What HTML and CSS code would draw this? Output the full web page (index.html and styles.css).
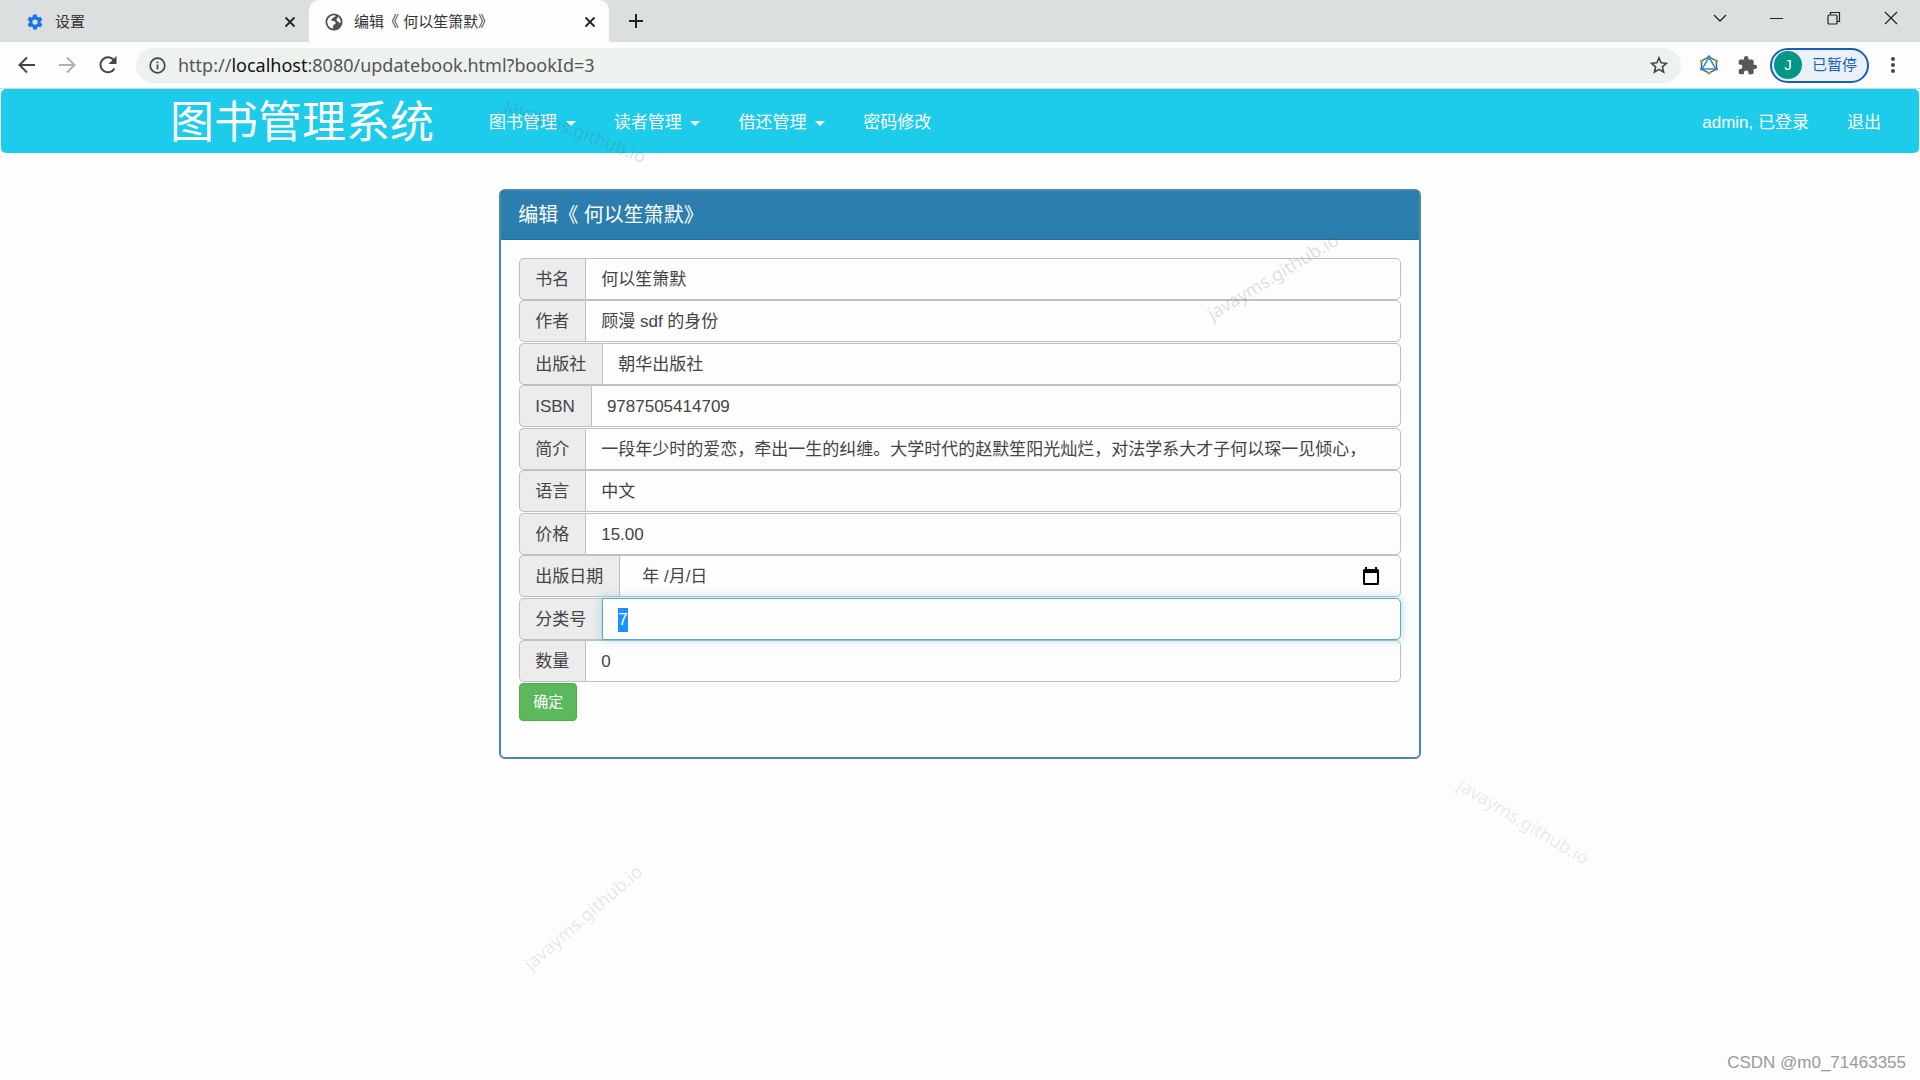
FILE: index.html
```
<!DOCTYPE html>
<html lang="zh-CN">
<head>
    <meta charset="UTF-8">
    <meta name="viewport" content="width=device-width, initial-scale=1.0">
    <title>编辑《 何以笙箫默》</title>
    <link rel="stylesheet" href="styles.css">
</head>
<body>
    <!-- Browser window -->
    <div class="tab-bar">
        <div class="tab">
            <svg class="tab-icon" viewBox="0 0 24 24" fill="#1a73e8"><path d="M19.4 13c0-.3.1-.6.1-1s0-.7-.1-1l2.1-1.600c.2-.2.2-.4.1-.6l-2-3.500c-.1-.2-.3-.3-.6-.2l-2.500 1c-.5-.4-1.100-.7-1.700-1l-.4-2.600c0-.3-.2-.5-.5-.5h-4c-.2 0-.5.2-.5.400l-.4 2.700c-.6.2-1.100.6-1.700 1l-2.500-1c-.2-.1-.5 0-.6.200l-2 3.500c-.1.200 0 .5.100.6L4.500 11c0 .3-.1.600-.1 1s0 .700.1 1l-2.100 1.600c-.2.200-.2.400-.1.600l2 3.500c.1.200.3.300.6.200l2.500-1c.5.400 1.100.700 1.700 1l.4 2.600c0 .300.2.500.5.500h4c.2 0 .5-.2.5-.4l.4-2.700c.6-.2 1.100-.6 1.700-1l2.500 1c.2.100.5 0 .6-.2l2-3.500c.1-.2 0-.5-.1-.6zM12 15.500a3.500 3.500 0 1 1 0-7 3.500 3.500 0 0 1 0 7z"/></svg>
            <span class="tab-title">设置</span>
            <button class="icon-btn" aria-label="关闭"><svg width="12" height="12" viewBox="0 0 12 12"><path d="M1.500 1.500l9 9M10.500 1.500l-9 9" stroke="#222" stroke-width="1.800"/></svg></button>
        </div>
        <div class="tab active">
            <svg class="tab-icon" viewBox="0 0 20 20"><circle cx="10" cy="10" r="9.500" fill="#4d5156"/><path d="M2.500 9.500C3 5.500 6 2.700 10 2.400l1.800.4c-.2 1.600-1.300 2-2.800 2.200-.3 1.200-.8 1.700-2 1.800.1 1.300.2 1.900 1.300 2 1.800 0 3.400.2 3.500 2.200.3 1.300-1.500 1.500-2.400 2.100-.4 1.300.1 2.500-.8 4.200-3.500-.5-6.200-3.700-6.100-7.800zM14 4c2 1.300 3.300 3.500 3.400 6-.5 1.300-1 1.500-1.800.5-.6-1.300-2-.9-2.700-2.100-.4-1.300.3-2.400 1.200-2.800z" fill="#fdfdfd"/></svg>
            <span class="tab-title">编辑《 何以笙箫默》</span>
            <button class="icon-btn" aria-label="关闭"><svg width="12" height="12" viewBox="0 0 12 12"><path d="M1.500 1.500l9 9M10.500 1.500l-9 9" stroke="#222" stroke-width="1.800"/></svg></button>
        </div>
        <button class="icon-btn new-tab" aria-label="新标签页"><svg width="16" height="16" viewBox="0 0 16 16"><path d="M8 1v14M1 8h14" stroke="#222" stroke-width="2"/></svg></button>
        <div class="window-buttons">
            <button class="icon-btn" aria-label="搜索标签页"><svg width="14" height="14" viewBox="0 0 14 14"><path d="M1 4l6 6 6-6" fill="none" stroke="#222" stroke-width="1.300"/></svg></button>
            <button class="icon-btn" aria-label="最小化"><svg width="14" height="14" viewBox="0 0 14 14"><path d="M0 7.500h13" stroke="#222"/></svg></button>
            <button class="icon-btn" aria-label="还原"><svg width="14" height="14" viewBox="0 0 14 14" fill="none" stroke="#222" stroke-width="1.200"><rect x="1" y="4" width="9" height="9" rx="1"/><path d="M3.500 4V1.500h9v9H10"/></svg></button>
            <button class="icon-btn" aria-label="关闭窗口"><svg width="14" height="14" viewBox="0 0 14 14"><path d="M1 1l12 12M13 1L1 13" stroke="#222" stroke-width="1.200"/></svg></button>
        </div>
    </div>

    <div class="toolbar">
        <button class="icon-btn" aria-label="后退"><svg width="18" height="18" viewBox="0 0 18 18" fill="none" stroke="#444" stroke-width="2"><path d="M17 9H2M9 1.500L1.500 9 9 16.500"/></svg></button>
        <button class="icon-btn" aria-label="前进"><svg width="18" height="18" viewBox="0 0 18 18" fill="none" stroke="#b0b2b4" stroke-width="2"><path d="M1 9h15M9 1.500L16.500 9 9 16.500"/></svg></button>
        <button class="icon-btn" aria-label="重新加载"><svg width="20" height="20" viewBox="0 0 20 20"><path d="M16.500 13.500A7.500 7.500 0 1 1 16 5.300" fill="none" stroke="#444" stroke-width="2"/><path d="M18.500 1v8h-8z" fill="#444"/></svg></button>
        <div class="address">
            <svg width="17" height="17" viewBox="0 0 17 17" fill="none" stroke="#444" stroke-width="1.700"><circle cx="8.500" cy="8.500" r="7.300"/><path d="M8.500 7.500v5M8.500 4.400v1.800"/></svg>
            <a class="url" href="#">http://<b>localhost</b>:8080/updatebook.html?bookId=3</a>
            <button class="icon-btn" aria-label="收藏"><svg width="18" height="18" viewBox="0 0 18 18"><path d="M9 1.800l2.100 5 5.400.5-4.100 3.600 1.200 5.300L9 13.400l-4.600 2.800 1.200-5.300L1.500 7.300l5.400-.5z" fill="none" stroke="#444" stroke-width="1.600"/></svg></button>
        </div>
        <button class="icon-btn ext" aria-label="GraphQL"><svg width="20" height="20" viewBox="0 0 20 20"><path d="M10 2l7.500 4v8L10 18l-7.500-4V6z" fill="none" stroke="#555" stroke-width="1.400"/><path d="M10 2.500L17 14H3z" fill="#fff" stroke="#2b8fc4" stroke-width="1.500"/><g fill="#7ab82e"><circle cx="2.500" cy="6" r="1.600"/><circle cx="17.500" cy="6" r="1.600"/><circle cx="10" cy="18" r="1.600"/></g><g fill="#2b8fc4"><circle cx="10" cy="2" r="1.700"/><circle cx="2.500" cy="14" r="1.600"/><circle cx="17.500" cy="14" r="1.600"/></g></svg></button>
        <button class="icon-btn ext" aria-label="扩展程序"><svg width="21" height="21" viewBox="0 0 24 24" fill="#555759"><path d="M20.500 11H19V7a2 2 0 0 0-2-2h-4V3.500a2.500 2.500 0 0 0-5 0V5H4a2 2 0 0 0-2 2v3.800h1.500a2.700 2.700 0 0 1 0 5.400H2V20a2 2 0 0 0 2 2h3.800v-1.500a2.700 2.700 0 0 1 5.400 0V22H17a2 2 0 0 0 2-2v-4h1.500a2.500 2.500 0 0 0 0-5z"/></svg></button>
        <button class="profile"><span class="avatar">J</span>已暂停</button>
        <button class="icon-btn more" aria-label="更多"><svg width="4" height="18" viewBox="0 0 4 18" fill="#444"><circle cx="2" cy="3" r="2"/><circle cx="2" cy="9" r="2"/><circle cx="2" cy="15" r="2"/></svg></button>
    </div>

    <!-- Page -->
    <nav class="navbar">
        <a class="brand" href="#">图书管理系统</a>
        <a href="#">图书管理 <span class="caret"></span></a>
        <a href="#">读者管理 <span class="caret"></span></a>
        <a href="#">借还管理 <span class="caret"></span></a>
        <a href="#">密码修改</a>
        <a class="user" href="#">admin, 已登录</a>
        <a href="#">退出</a>
    </nav>

    <main class="panel">
        <h3 class="panel-heading">编辑《 何以笙箫默》</h3>
        <form class="panel-body">
            <div class="input-group">
                <label for="name">书名</label>
                <input type="text" id="name" value="何以笙箫默">
            </div>
            <div class="input-group">
                <label for="author">作者</label>
                <input type="text" id="author" value="顾漫 sdf 的身份">
            </div>
            <div class="input-group">
                <label for="publish">出版社</label>
                <input type="text" id="publish" value="朝华出版社">
            </div>
            <div class="input-group">
                <label for="isbn">ISBN</label>
                <input type="text" id="isbn" value="9787505414709">
            </div>
            <div class="input-group">
                <label for="introduction">简介</label>
                <input type="text" id="introduction" value="一段年少时的爱恋，牵出一生的纠缠。大学时代的赵默笙阳光灿烂，对法学系大才子何以琛一见倾心，">
            </div>
            <div class="input-group">
                <label for="language">语言</label>
                <input type="text" id="language" value="中文">
            </div>
            <div class="input-group">
                <label for="price">价格</label>
                <input type="text" id="price" value="15.00">
            </div>
            <div class="input-group date">
                <label for="pubdate">出版日期</label>
                <input type="text" id="pubdate" value="年 /月/日">
                <button type="button" class="icon-btn" aria-label="选择日期"><svg width="16" height="18" viewBox="0 0 16 18"><path d="M2 2V0h2v2h8V0h2v2h.500A1.500 1.500 0 0 1 16 3.500v13a1.500 1.500 0 0 1-1.500 1.500h-13A1.500 1.500 0 0 1 0 16.500v-13A1.500 1.500 0 0 1 1.500 2zM2 6v10h12V6z"/></svg></button>
            </div>
            <div class="input-group">
                <label for="classId">分类号</label>
                <input type="text" id="classId" value="7">
            </div>
            <div class="input-group">
                <label for="number">数量</label>
                <input type="text" id="number" value="0">
            </div>
            <button type="submit" class="btn-success">确定</button>
        </form>
    </main>

    <!-- Watermarks -->
    <span class="watermark mark-nav">javayms.github.io</span>
    <span class="watermark mark-panel">javayms.github.io</span>
    <span class="watermark mark-left">javayms.github.io</span>
    <span class="watermark mark-right">javayms.github.io</span>
    <span class="credit">CSDN @m0_71463355</span>

    <script>
        document.getElementById("classId").select();
    </script>
</body>
</html>
```
FILE: styles.css
```
* {
    box-sizing: border-box;
}

html {
    height: 100%;
}

body {
    margin: 0;
    min-height: 100%;
    position: relative;
    overflow: hidden;
    background-color: #fdfdfd;
    color: #444;
    font-family: "Liberation Sans", "Noto Sans CJK SC", sans-serif;
    font-size: 17px;
    line-height: 24px;
}

a {
    color: inherit;
    text-decoration: none;
}

button,
input {
    font: inherit;
    color: inherit;
}

.icon-btn {
    display: flex;
    align-items: center;
    justify-content: center;
    flex: none;
    padding: 0;
    border: none;
    background: none;
}

/* Tabs */
.tab-bar {
    display: flex;
    align-items: center;
    height: 42px;
    background-color: #dbdfe0;
}

.tab {
    display: flex;
    align-items: center;
    width: 309px;
    height: 42px;
    padding: 2px 13px 0 26px;
    color: #333;
    font-size: 15px;
}

.tab.active {
    width: 300px;
    padding-left: 16px;
    background-color: #fdfdfd;
    border-radius: 10px 10px 0 0;
}

.tab-icon {
    width: 18px;
    height: 18px;
    margin-right: 11px;
}

.tab-title {
    flex: 1;
}

.new-tab {
    margin-left: 19px;
}

.window-buttons {
    display: flex;
    gap: 43px;
    margin: 0 22px 6px auto;
}

/* Toolbar */
.toolbar {
    display: flex;
    align-items: center;
    height: 47px;
    padding: 0 25px 0 18px;
    gap: 22px;
    border-bottom: 1px solid #ddd3d2;
}

.address {
    display: flex;
    align-items: center;
    flex: 1;
    height: 35px;
    padding: 0 13px;
    margin: 0 -4px;
    border-radius: 18px;
    background-color: #eef2ef;
}

.url {
    flex: 1;
    margin-left: 12px;
    color: #555;
    font-family: "Noto Sans", sans-serif;
    font-size: 18px;
}

.url b {
    color: #111;
    font-weight: normal;
}

.ext {
    margin-right: -4px;
}

.profile {
    display: flex;
    align-items: center;
    gap: 10px;
    height: 35px;
    margin-left: -6px;
    padding: 0 10px 0 2px;
    border: 2px solid #1b5fb5;
    border-radius: 18px;
    background-color: #eaf0f8;
    color: #1b5fb5;
    font-size: 15px;
}

.avatar {
    width: 28px;
    height: 28px;
    border-radius: 50%;
    background-color: #009688;
    color: #fff;
    line-height: 28px;
    text-align: center;
}

/* Navbar */
.navbar {
    display: flex;
    align-items: center;
    height: 64px;
    margin: 0 1px 36px;
    padding: 3px 19px 0 150px;
    border-radius: 5px;
    background-color: #1dcbea;
    color: #fff;
}

.navbar a {
    padding: 0 19px;
    white-space: nowrap;
}

.navbar .brand {
    margin-right: 17px;
    font-size: 44px;
    line-height: 60px;
}

.navbar .user {
    margin-left: auto;
}

.caret {
    display: inline-block;
    margin-left: 4px;
    vertical-align: middle;
    border-top: 5px solid;
    border-left: 5px solid transparent;
    border-right: 5px solid transparent;
}

/* Panel */
.panel {
    width: 48%;
    margin: 0 auto;
    border: 2px solid #4e8aa5;
    border-radius: 6px;
}

.panel-heading {
    margin: 0;
    padding: 11px 17px;
    border-bottom: 1px solid #23709c;
    background-color: #2c7eae;
    color: #fff;
    font-size: 20px;
    font-weight: normal;
    line-height: 26px;
}

.panel-body {
    padding: 18px 18px 36px;
}

.input-group {
    display: flex;
    height: 42px;
}

.input-group:nth-child(even) {
    margin-bottom: 1px;
}

.input-group label {
    padding: 9px 16px 0 15px;
    border: 1px solid #bfbfbf;
    border-right: none;
    border-radius: 5px 0 0 5px;
    background-color: #ececec;
}

.input-group input {
    flex: 1;
    min-width: 0;
    padding: 1px 15px 0;
    border: 1px solid #bfbfbf;
    border-radius: 0 5px 5px 0;
    outline: none;
    background-color: #fdfdfd;
}

.input-group input:focus {
    border-color: #5aa9cd;
    box-shadow: 0 0 10px rgba(80, 190, 215, 0.5);
    z-index: 1;
}

.input-group input::selection {
    background-color: #1e90ff;
    color: #fff;
}

.date input {
    padding-left: 22px;
    border-right: none;
    border-radius: 0;
}

.date button {
    padding-right: 21px;
    border: solid #bfbfbf;
    border-width: 1px 1px 1px 0;
    border-radius: 0 5px 5px 0;
}

.btn-success {
    display: block;
    height: 38px;
    padding: 0 13px;
    border: 1px solid #4cae4c;
    border-radius: 4px;
    background-color: #5cb85c;
    color: #fff;
    font-size: 15px;
}

/* Watermarks */
.watermark {
    position: absolute;
    color: rgba(90, 90, 90, 0.2);
    font-family: "Noto Sans", sans-serif;
    font-size: 18px;
    pointer-events: none;
}

.mark-nav {
    left: 501px;
    top: 118px;
    transform: rotate(21deg);
}

.mark-panel {
    left: 1198px;
    top: 264px;
    transform: rotate(-31deg);
}

.mark-left {
    left: 508px;
    top: 905px;
    color: rgba(90, 90, 90, 0.15);
    transform: rotate(-41deg);
}

.mark-right {
    left: 1449px;
    top: 809px;
    color: rgba(90, 90, 90, 0.13);
    transform: rotate(31deg);
}

.credit {
    position: absolute;
    right: 14px;
    bottom: 5px;
    color: #999;
}
```
